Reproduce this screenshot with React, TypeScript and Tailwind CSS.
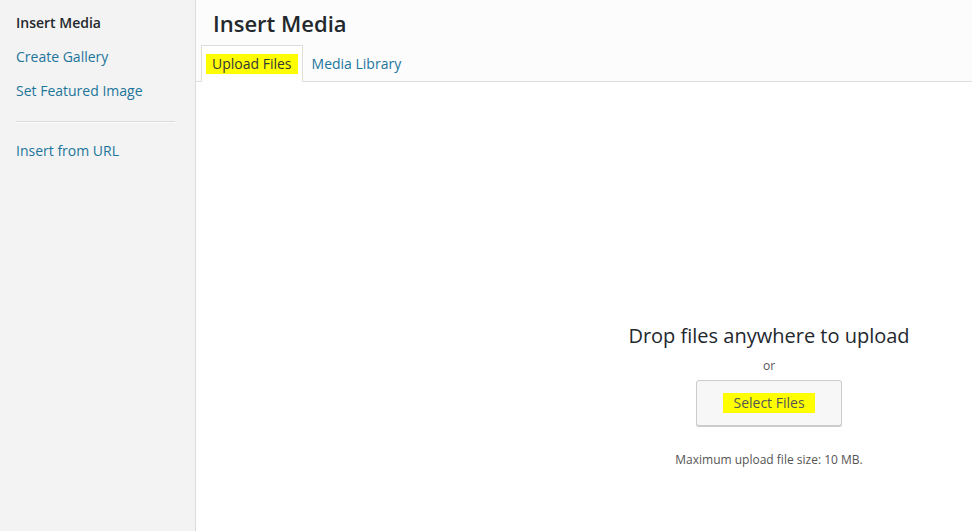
import React from "react";

export default function App() {
  return (
    <div
      className="flex h-[531px] w-[972px] overflow-hidden bg-white text-[#23282d]"
      style={{ fontFamily: '"Open Sans", "Noto Sans", sans-serif' }}
    >
      {/* Sidebar */}
      <div className="flex w-[196px] shrink-0 flex-col border-r border-[#dddddd] bg-[#f3f3f3] pt-[13px]">
        <div className="px-4 text-[14px] leading-[20px] font-semibold text-[#23282d]">Insert Media</div>
        <div className="mt-[14px] px-4 text-[14px] leading-[20px] text-[#21759b]">Create Gallery</div>
        <div className="mt-[14px] px-4 text-[14px] leading-[20px] text-[#21759b]">Set Featured Image</div>
        <div className="mx-4 mt-[20px] w-[159px] border-t border-[#dcdcdc] shadow-[0_1px_0_#fafafa]" />
        <div className="mt-[19px] px-4 text-[14px] leading-[20px] text-[#21759b]">Insert from URL</div>
      </div>

      {/* Main */}
      <div className="flex min-w-0 flex-1 flex-col">
        <div className="bg-[#fcfcfc]">
          <div className="px-[17px] pt-[7px] text-[22px] leading-[32px] font-semibold text-[#23282d]">
            Insert Media
          </div>
          <div className="flex items-end border-b border-[#dddddd] pl-[5px] pt-[6px]">
            <div className="-mb-px flex h-[37px] items-center border border-b-0 border-[#dddddd] bg-white px-[4px]">
              <span className="bg-[#ffff00] px-[6px] text-[14px] leading-[20px] text-[#32373c]">Upload Files</span>
            </div>
            <div className="flex h-[36px] items-center px-[9px] text-[14px] text-[#21759b]">Media Library</div>
          </div>
        </div>

        <div className="relative flex-1 overflow-hidden">
          <div className="flex w-[1146px] flex-col items-center pt-[240px]">
            <div className="text-[20px] leading-[28px] text-[#23282d]">Drop files anywhere to upload</div>
            <div className="mt-[8px] text-[12px] leading-[16px] text-[#555555]">or</div>
            <div className="mt-[6px] flex h-[46px] w-[146px] items-center justify-center rounded-[3px] border border-[#cccccc] bg-[#f7f7f7] shadow-[0_1px_0_#cccccc]">
              <span className="bg-[#ffff00] px-[10px] text-[14px] leading-[20px] text-[#555555]">Select Files</span>
            </div>
            <div className="mt-[26px] text-[12px] leading-[16px] text-[#555555]">Maximum upload file size: 10 MB.</div>
          </div>
        </div>
      </div>
    </div>
  );
}
